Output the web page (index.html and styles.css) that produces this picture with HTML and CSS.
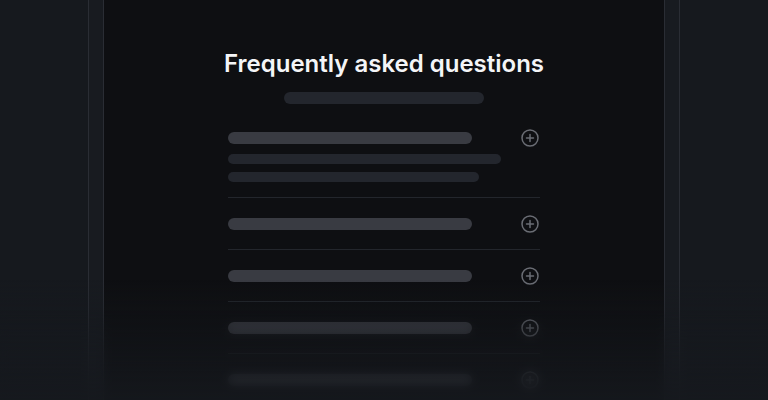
FILE: index.html
```html
<!DOCTYPE html>
<html lang="en">
<head>
    <meta charset="UTF-8">
    <meta name="viewport" content="width=device-width, initial-scale=1.0">
    <title>FAQ skeleton</title>
    <link rel="stylesheet" href="styles.css">
</head>
<body>
    <div class="frame">
        <div class="panel">
            <h1 class="title">Frequently asked questions</h1>
            <div class="subtitle-bar"></div>

            <div class="faq-list">
                <div class="faq-item">
                    <div class="faq-row">
                        <div class="question-bar"></div>
                        <svg class="plus-icon" viewBox="0 0 18 18" width="18" height="18">
                            <circle cx="9" cy="9" r="8" fill="none" stroke="currentColor" stroke-width="1.5"/>
                            <path d="M9 5.5v7M5.5 9h7" stroke="currentColor" stroke-width="1.5" stroke-linecap="round"/>
                        </svg>
                    </div>
                    <div class="answer-bar long"></div>
                    <div class="answer-bar short"></div>
                </div>
                <div class="faq-item">
                    <div class="faq-row">
                        <div class="question-bar"></div>
                        <svg class="plus-icon" viewBox="0 0 18 18" width="18" height="18">
                            <circle cx="9" cy="9" r="8" fill="none" stroke="currentColor" stroke-width="1.5"/>
                            <path d="M9 5.5v7M5.5 9h7" stroke="currentColor" stroke-width="1.5" stroke-linecap="round"/>
                        </svg>
                    </div>
                </div>
                <div class="faq-item">
                    <div class="faq-row">
                        <div class="question-bar"></div>
                        <svg class="plus-icon" viewBox="0 0 18 18" width="18" height="18">
                            <circle cx="9" cy="9" r="8" fill="none" stroke="currentColor" stroke-width="1.5"/>
                            <path d="M9 5.5v7M5.5 9h7" stroke="currentColor" stroke-width="1.5" stroke-linecap="round"/>
                        </svg>
                    </div>
                </div>
                <div class="faq-item">
                    <div class="faq-row">
                        <div class="question-bar"></div>
                        <svg class="plus-icon" viewBox="0 0 18 18" width="18" height="18">
                            <circle cx="9" cy="9" r="8" fill="none" stroke="currentColor" stroke-width="1.5"/>
                            <path d="M9 5.5v7M5.5 9h7" stroke="currentColor" stroke-width="1.5" stroke-linecap="round"/>
                        </svg>
                    </div>
                </div>
                <div class="faq-item">
                    <div class="faq-row">
                        <div class="question-bar"></div>
                        <svg class="plus-icon" viewBox="0 0 18 18" width="18" height="18">
                            <circle cx="9" cy="9" r="8" fill="none" stroke="currentColor" stroke-width="1.5"/>
                            <path d="M9 5.5v7M5.5 9h7" stroke="currentColor" stroke-width="1.5" stroke-linecap="round"/>
                        </svg>
                    </div>
                </div>
            </div>
        </div>
    </div>

    <!-- bottom fade: progressive blur, then colour wash on top -->
    <div class="fade-blur"></div>
    <div class="fade-tint"></div>
</body>
</html>
```

FILE: styles.css
```css
html, body {
    height: 100%;
}

body {
    margin: 0;
    font-family: Inter, "Noto Sans", sans-serif;
    background-color: #16191e;
    overflow: hidden;
    position: relative;
}

.frame {
    width: 562px;
    height: 400px;
    margin: 0 auto;
    padding: 0 14px;
    border-left: 1px solid #2a2d34;
    border-right: 1px solid #2a2d34;
    background-color: #181b20;
}

.panel {
    height: 100%;
    border-left: 1px solid #2a2d34;
    border-right: 1px solid #2a2d34;
    background-color: #0e0f12;
    padding-top: 48px;
    box-sizing: border-box;
}

.title {
    margin: 0;
    font-size: 24px;
    line-height: 32px;
    font-weight: 600;
    color: #f4f5f7;
    text-align: center;
}

.subtitle-bar {
    width: 200px;
    height: 12px;
    margin: 12px auto 0;
    border-radius: 6px;
    background-color: #23262d;
}

.faq-list {
    width: 312px;
    margin: 8px auto 0;
}

.faq-item {
    padding: 17px 0 16px;
    border-bottom: 1px solid #23262c;
}

.faq-item:first-child {
    padding-bottom: 15px;
}

.faq-row {
    display: flex;
    align-items: center;
    justify-content: space-between;
    padding-right: 1px;
}

.question-bar {
    width: 244px;
    height: 12px;
    border-radius: 6px;
    background-color: #393b42;
}

.plus-icon {
    color: #6a6d74;
    display: block;
}

.answer-bar {
    height: 10px;
    border-radius: 5px;
    background-color: #23262d;
}

.answer-bar.long {
    width: 273px;
    margin-top: 7px;
}

.answer-bar.short {
    width: 251px;
    margin-top: 8px;
}

.fade-blur,
.fade-tint {
    position: absolute;
    left: 0;
    right: 0;
    bottom: 0;
    height: 120px;
}

.fade-blur {
    backdrop-filter: blur(4px);
    -webkit-mask-image: linear-gradient(to bottom, transparent 25%, rgba(0, 0, 0, 0.5) 55%, #000);
    mask-image: linear-gradient(to bottom, transparent 25%, rgba(0, 0, 0, 0.5) 55%, #000);
}

.fade-tint {
    background: linear-gradient(to bottom, rgba(22, 25, 30, 0), rgba(22, 25, 30, 0.45) 55%, rgba(22, 25, 30, 0.88));
}
```
